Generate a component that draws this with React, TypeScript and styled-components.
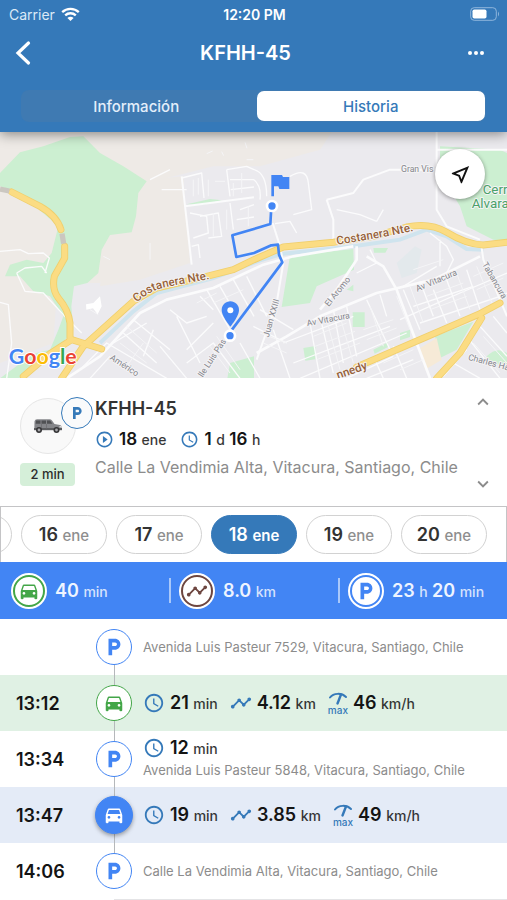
import React from "react";
import styled, { createGlobalStyle } from "styled-components";
import {
  MdAccessTime,
  MdDirectionsCar,
  MdExpandLess,
  MdExpandMore,
  MdLocalParking,
  MdOutlineNearMe,
  MdPlayCircleOutline,
  MdTimeline,
} from "react-icons/md";

const color = {
  header: "#3579b9",
  primary: "#3579b9",
  accent: "#4285f4",
  green: "#43a648",
  brown: "#6d4640",
  ink: "#141414",
  muted: "#8c8c8c",
  line: "#c4c4c6",
};

const GlobalStyle = createGlobalStyle`
  * { box-sizing: border-box; }
  body {
    margin: 0;
    background: #fff;
    color: ${color.ink};
    font-family: Inter, "Liberation Sans", sans-serif;
  }
  button { font: inherit; color: inherit; border: 0; background: none; padding: 0; cursor: pointer; }
  svg { display: block; flex: none; }
  h1, h2, p, ol { margin: 0; padding: 0; }
`;

/* ---------- Header ---------- */

const Header = styled.header`
  position: relative;
  z-index: 1;
  padding-bottom: 10px;
  background: ${color.header};
  color: #fff;
  box-shadow: 0 2px 12px rgba(0, 0, 0, 0.45);
`;

const StatusBar = styled.div`
  display: grid;
  grid-template-columns: 1fr auto 1fr;
  align-items: center;
  height: 28px;
  padding: 0 7px 0 9px;
  font-size: 14px;
`;

const Carrier = styled.span`
  display: flex;
  align-items: center;
  gap: 6px;
  color: #dbe9f7;
`;

const Clock = styled.span`
  font-weight: 600;
`;

const BatterySlot = styled.span`
  justify-self: end;
`;

const NavBar = styled.div`
  display: grid;
  grid-template-columns: 48px 1fr 56px;
  align-items: center;
  height: 50px;
  padding: 0 22px 0 14px;
`;

const NavButton = styled.button<{ $end?: boolean }>`
  display: flex;
  justify-content: ${(p) => (p.$end ? "flex-end" : "flex-start")};
  align-items: center;
  height: 40px;
`;

const Title = styled.h1`
  text-align: center;
  font-size: 20px;
  line-height: 28px;
  font-weight: 600;
`;

const Segmented = styled.div`
  display: grid;
  grid-template-columns: 1fr 1fr;
  gap: 4px;
  margin: 12px 21px 0;
  border-radius: 8px;
  background: #3f7ab2;
`;

const Segment = styled.button<{ $active?: boolean }>`
  height: 32px;
  border: 1px solid transparent;
  border-radius: 8px;
  background-clip: padding-box;
  font-size: 15px;
  font-weight: 500;
  ${(p) =>
    p.$active
      ? `background-color: #fff; color: ${color.primary};`
      : `color: #e3eefa;`}
`;

/* ---------- Map ---------- */

const MapFrame = styled.section`
  position: relative;
  height: 246px;
  overflow: hidden;
`;

const MapArt = styled.svg`
  width: 100%;
  height: 100%;
`;

const LocateButton = styled.button`
  position: absolute;
  top: 17px;
  right: 22px;
  display: grid;
  place-items: center;
  width: 50px;
  height: 50px;
  border-radius: 50%;
  background: #fff;
  color: #111;
  box-shadow: 0 1px 4px rgba(0, 0, 0, 0.4);
`;

/* ---------- Vehicle card ---------- */

const VehicleCard = styled.section`
  display: grid;
  grid-template-columns: 75px 1fr 24px;
  height: 128px;
  padding: 18px 11px 0 20px;
`;

const AvatarColumn = styled.div`
  display: flex;
  flex-direction: column;
  gap: 9px;
`;

const Avatar = styled.div`
  position: relative;
  display: grid;
  place-items: center;
  width: 56px;
  height: 56px;
  margin-top: 2px;
  border: 1px solid #e6e6e6;
  border-radius: 50%;
  background: #f9f9f9;
`;

const ParkedBadge = styled.span`
  position: absolute;
  top: -2px;
  left: 40px;
  display: grid;
  place-items: center;
  width: 32px;
  height: 32px;
  border: 1px solid ${color.primary};
  border-radius: 50%;
  background: #f9fafb;
  color: ${color.primary};
`;

const AgeTag = styled.span`
  width: 55px;
  border-radius: 4px;
  background: #d5efd9;
  color: #2c2c2c;
  text-align: center;
  font-size: 13px;
  line-height: 23px;
  font-weight: 500;
`;

const Plate = styled.h2`
  font-size: 18px;
  line-height: 26px;
  font-weight: 600;
  color: #333;
`;

const VehicleFacts = styled.div`
  display: flex;
  align-items: center;
  gap: 14px;
  height: 34px;
`;

const VehicleAddress = styled.p`
  font-size: 16px;
  line-height: 22px;
  color: ${color.muted};
  white-space: nowrap;
`;

const Steppers = styled.div`
  display: flex;
  flex-direction: column;
  justify-content: space-between;
  height: 104px;
  margin-top: -5px;
  color: ${color.muted};
`;

/* ---------- Quantities ---------- */

const Fact = styled.span`
  display: inline-flex;
  align-items: center;
  gap: 5px;
  white-space: nowrap;
`;

const FactIcon = styled.span`
  display: inline-flex;
  color: ${color.primary};
`;

const Value = styled.span<{ $small?: boolean }>`
  font-size: ${(p) => (p.$small ? 17 : 18)}px;
  line-height: 22px;
  font-weight: 600;
`;

const Unit = styled.span`
  font-size: 14px;
  font-weight: 500;
  opacity: 0.85;
`;

/* ---------- Day picker ---------- */

const DayStrip = styled.nav`
  display: flex;
  justify-content: flex-end;
  gap: 9px;
  padding: 8px 19px 8px 0;
  overflow: hidden;
  border: 1px solid ${color.line};
  border-bottom: 0;
`;

const DayPill = styled.button<{ $active?: boolean }>`
  flex: none;
  width: 86px;
  height: 39px;
  border: 1px solid ${(p) => (p.$active ? color.primary : "#d2d2d2")};
  border-radius: 20px;
  background: ${(p) => (p.$active ? color.primary : "#fff")};
  color: ${(p) => (p.$active ? "#fff" : "#333")};
  font-size: 18px;
  font-weight: 600;
`;

const Month = styled.span<{ $active?: boolean }>`
  color: ${(p) => (p.$active ? "#fff" : "#8e8e8e")};
  font-size: 15px;
  font-weight: ${(p) => (p.$active ? 600 : 500)};
`;

/* ---------- Summary ---------- */

const Summary = styled.section`
  display: grid;
  grid-template-columns: repeat(3, 1fr);
  align-items: center;
  height: 57px;
  background: ${color.accent};
  color: #eef4ff;
`;

const Total = styled.div<{ $divided?: boolean }>`
  display: flex;
  align-items: center;
  gap: 8px;
  padding-left: ${(p) => (p.$divided ? 0 : 11)}px;
  white-space: nowrap;
`;

const Divider = styled.span`
  width: 2px;
  height: 25px;
  background: #a9c8fa;
`;

const TotalBadge = styled.span<{ $color: string }>`
  display: grid;
  place-items: center;
  flex: none;
  width: 36px;
  height: 36px;
  border: 2px solid #fff;
  border-radius: 50%;
  background: #fff;
  color: ${(p) => p.$color};
`;

const BadgeRing = styled.span`
  display: grid;
  place-items: center;
  width: 32px;
  height: 32px;
  border: 2px solid currentColor;
  border-radius: 50%;
`;

/* ---------- Timeline ---------- */

const Timeline = styled.ol`
  list-style: none;
`;

const tint = { none: "#fff", green: "#e0f1e4", blue: "#e4ebf7" };
type Tint = keyof typeof tint;

const Entry = styled.li<{ $tint: Tint }>`
  display: grid;
  grid-template-columns: 79px 70px 1fr;
  align-items: center;
  height: 56px;
  background: ${(p) => tint[p.$tint]};
`;

const Time = styled.time`
  padding-left: 16px;
  font-size: 18px;
  font-weight: 600;
`;

type Segment = "start" | "middle" | "end";

const Track = styled.div<{ $segment: Segment }>`
  display: grid;
  place-items: center;
  height: 100%;
  background: linear-gradient(#b5b8bb, #b5b8bb) no-repeat;
  background-size: 1px ${(p) => (p.$segment === "middle" ? "100%" : "50%")};
  background-position: center ${(p) => (p.$segment === "start" ? "bottom" : "top")};
`;

const Stop = styled.span<{ $kind: "parked" | "trip" | "current" }>`
  display: grid;
  place-items: center;
  width: ${(p) => (p.$kind === "current" ? 38 : 36)}px;
  height: ${(p) => (p.$kind === "current" ? 38 : 36)}px;
  border: 1px solid ${(p) => (p.$kind === "trip" ? color.green : color.accent)};
  border-radius: 50%;
  background: ${(p) => (p.$kind === "current" ? color.accent : "#fff")};
  color: ${(p) =>
    p.$kind === "current" ? "#fff" : p.$kind === "trip" ? color.green : color.accent};
  box-shadow: ${(p) => (p.$kind === "current" ? "0 2px 4px rgba(0,0,0,.35)" : "none")};
`;

const Details = styled.div`
  display: flex;
  flex-direction: column;
  margin-left: -6px;
`;

const Facts = styled.div`
  display: flex;
  align-items: center;
  gap: 12px;
`;

const Place = styled.p`
  font-size: 13px;
  line-height: 22px;
  color: ${color.muted};
  white-space: nowrap;
`;

const EndRule = styled.div`
  height: 1px;
  margin-left: 114px;
  background: #e4e4e6;
`;

const MaxIcon = styled.span`
  display: flex;
  flex-direction: column;
  align-items: center;
  color: ${color.primary};
  font-size: 10px;
  line-height: 8px;
  font-weight: 500;
`;

/* ---------- Drawings ---------- */

const WifiGlyph = () => (
  <svg width="19" height="15" viewBox="0 0 19 15" fill="none" stroke="#fff" aria-hidden="true">
    <path d="M1.2 5.2C5.8.8 13.2.8 17.8 5.2" strokeWidth="2.3" />
    <path d="M4.2 8.4c3-2.9 7.6-2.9 10.6 0" strokeWidth="2.3" />
    <path d="M9.5 14L6.4 10.9c1.7-1.6 4.5-1.6 6.2 0z" fill="#fff" stroke="none" />
  </svg>
);

const BatteryGlyph = () => (
  <svg width="30" height="14" viewBox="0 0 30 14" aria-label="Batería">
    <rect x=".7" y=".7" width="25.6" height="12.6" rx="3.5" fill="none" stroke="#8fb6dc" />
    <rect x="2.5" y="2.5" width="14" height="9" rx="1.8" fill="#fff" />
    <path d="M28 4.5q2 2.5 0 5z" fill="#8fb6dc" />
  </svg>
);

const BackGlyph = () => (
  <svg width="18" height="26" viewBox="0 0 18 26" fill="none" aria-hidden="true">
    <path d="M14.500 3L4 13l10.500 10" stroke="#fff" strokeWidth="3.200" strokeLinecap="round" />
  </svg>
);

const DotsGlyph = () => (
  <svg width="18" height="6" viewBox="0 0 18 6" fill="#fff" aria-hidden="true">
    <circle cx="3" cy="3" r="2" />
    <circle cx="9" cy="3" r="2" />
    <circle cx="15" cy="3" r="2" />
  </svg>
);

const SuvDrawing = () => (
  <svg width="30" height="16" viewBox="0 0 30 16" aria-hidden="true">
    <path d="M1.5 3.2Q2 1.2 4 1.2h12.5q1.5 0 2.5 1.4L21.500 6l5.500 1q1.600.5 1.600 2v3H1.300z" fill="#85868a" />
    <path d="M3 2.500h4.500v3.300H2.700zM8.500 2.500h4.500v3.300H8.500zM14 2.500h3l2.500 3.300H14z" fill="#505154" />
    <path d="M1 10h28v2.200H1z" fill="#5c5d60" />
    <path d="M8.500 6v5M13.500 6v5" stroke="#66676a" strokeWidth=".6" />
    <path d="M26.500 8h2v1.500h-2z" fill="#ddd" />
    <circle cx="6" cy="12" r="3" fill="#353537" />
    <circle cx="6" cy="12" r="1.400" fill="#a7a7aa" />
    <circle cx="23.500" cy="12" r="3" fill="#353537" />
    <circle cx="23.500" cy="12" r="1.400" fill="#a7a7aa" />
  </svg>
);

const GaugeGlyph = () => (
  <svg width="20" height="14" viewBox="0 0 20 14" fill="none" stroke="currentColor" aria-hidden="true">
    <path d="M2 5.500C5.500 1 13.500.5 18 5" strokeWidth="2" strokeLinecap="round" />
    <path d="M13 2.500L9.500 11.500" strokeWidth="2.400" strokeLinecap="round" />
  </svg>
);

const CityMap = () => (
  <MapArt viewBox="0 6 1521 740" preserveAspectRatio="xMidYMid slice" role="img" aria-label="Mapa del recorrido">
    <rect width="1521" height="750" fill="#ebeaee" />
    {/* hills */}
    <g fill="#eeeae6">
      <path d="M0 0H1000L960 60 780 110 640 110 560 130 440 160 400 320 330 400 300 460H0z" />
      <path d="M0 330L180 350 160 640 0 700z" />
      <path d="M440 150L550 140 570 400 420 450 300 470 320 320z" />
    </g>
    {/* parks */}
    <g fill="#ccefd1">
      <path d="M0 130L60 68 130 50 210 22 250 20 300 70 370 110 440 155 415 190 408 260 395 308 330 316 305 360 295 430 262 460 222 470 214 530 220 600 170 660 60 746 0 746 100 672 150 660 175 600 190 560 150 500 100 485 60 440 15 440 30 405 80 390 130 400 155 370 175 290 60 190 0 170z" />
      <path d="M870 378L1060 358 1062 420 950 470 930 520 845 532z" />
      <path d="M1320 50L1500 60 1521 70V335L1480 330 1400 290 1380 230 1320 130z" />
      <path d="M1058 548h36v44h-36zM910 655l36-6v40l-30 4zM1120 355h44l-8 14h-34zM1305 620L1420 576 1370 660 1320 685zM1460 680q30-30 61-10v34h-61zM1200 610l30-10v22l-30 10zM1120 660l44-22v14l-40 20zM690 700l72-20v66h-80zM1040 480l20-15v20zM560 224l70-16 36 4-60 14z" />
    </g>
    <path d="M1190 400l55-50 20 10-15 70-45 15z" fill="#e3e9ec" />
    <path d="M1260 655l50-30 15 65-50 30z" fill="#f6ead7" />
    {/* river */}
    <path d="M300 640L400 545 470 490 640 445 780 392 850 372 1060 350 1200 330 1280 300 1340 320 1400 358 1450 360" fill="none" stroke="#cfe4ee" strokeWidth="12" />
    {/* streets */}
    <g fill="none" stroke="#fbfbfc" strokeWidth="4" strokeLinejoin="round">
      <path strokeWidth="8" d="M200 746L300 680 420 550 500 510 640 475 790 405 880 380 1060 350M770 670L860 620 960 560 1130 490 1300 450 1440 380" />
      <path strokeWidth="8" d="M1100 380L1150 410 1190 480 1235 600 1290 746M1070 350V390L1010 480 960 540" />
      <path strokeWidth="6" d="M818 280L840 350 850 400 830 520 770 690" />
      <path d="M0 365L60 360 85 372 130 370 148 385 135 430M50 430L75 415 125 410 140 430M50 430L75 485 130 490 190 555 245 610M0 518L25 525 35 640 20 746" />
      <path strokeWidth="6" d="M545 140L575 405M555 230L762 203" />
      <path d="M545 145L605 130 612 205M570 250L620 260 625 310 580 325M600 260L655 250 665 320 625 325M560 180H485M450 150L510 120M680 120L740 110 762 120M680 120L690 200M690 150H762M692 180L762 172M690 220L700 300M720 240L762 225M710 270L762 262M575 350L595 345 600 385" />
      <path d="M870 140Q920 110 925 160L935 240 880 255M762 120Q800 130 800 200M762 150Q785 170 780 210M825 282L870 275 890 310" />
      <path strokeWidth="6" d="M980 210L1000 270 1000 330M980 210L1060 190 1090 150 1170 120 1300 120M1310 0V240L1340 290 1440 330M1310 60H1521" />
      <path d="M1010 240L1080 255 1130 275M1130 275L1150 240" />
      <path strokeWidth="6" d="M1445 355L1450 390 1521 560" />
      <path d="M1290 310L1340 350 1360 390 1340 430M1320 330V410M1110 360L1130 400 1070 430M1310 410L1210 470M1521 430L1380 490 1200 570M1521 490L1500 500" />
      <path d="M400 570L510 660M370 610L470 700M510 540L560 580 620 560M530 560L600 700M560 660L640 580M600 500L640 540M620 480L690 600M660 470L700 540M700 450L762 560M740 440L800 560M760 590L860 640M720 640L780 746M820 600L870 746M780 540L880 600" />
      <path d="M930 580L960 746M960 560L1000 730M1000 540L1030 700M1040 530L1070 680M850 640L1060 560M880 700L1170 590M900 746L1220 610M1100 510L1170 660M1140 495L1160 560M1210 480L1260 600M1260 455L1300 560M1300 480L1340 580M1340 450L1380 560M1400 420L1440 540M1240 530L1420 470M1260 580L1500 500" />
      <path d="M1440 590L1521 680M1400 620L1500 746M1360 700L1440 746M1330 740L1400 660M1480 560L1521 610M1040 746L1180 680M1100 746L1240 690M1180 650L1220 746M1120 680L1150 746" />
      <path d="M240 720L320 640 500 746M270 746L330 680M340 640L440 580M460 600L430 680M480 650L560 746M560 700L640 640 720 746" />
    </g>
    {/* dense block grids */}
    <g fill="none" stroke="#f5f5f7" strokeWidth="3">
      <path d="M580 150v50M595 145v50M625 150v50M645 155h30M640 250v70M680 240v60M700 160v40M725 130v60M745 230v60" />
      <path d="M380 590l90 80M360 640l80 60M430 640l-50 70M590 520l60-30M640 520l90-40M650 620l70 100M630 650l60 80M780 610l80 30M790 640l70 30" />
      <path d="M940 620l100-40M945 650l120-45M950 690l130-50M1090 600l90-30M1100 630l90-35M1240 420l90-30M1280 500l110-40M1290 540l110-40M1420 440l90-40M1430 480l80-35M1150 700l90-40M1200 720l70-30" />
      <path d="M980 570l40 150M1020 560l40 140M1110 530l40 120M1190 500l40 100M1230 470l40 110M1370 430l40 110M1430 410l50 120M1420 640l80 90M1450 620l71 80" />
      <path d="M620 72l18-8M665 66l6 12M735 38l6 18M740 90h20M310 380l20 10M450 340v50M270 540l25 15" />
    </g>
    <path d="M258 524l22-4 20-20 5 30-12 24-14-18-20 4z" fill="#fff" />
    {/* highways */}
    <g fill="none" strokeLinejoin="round" strokeLinecap="round">
      <g stroke="#f0cf6d" strokeWidth="21">
        <path d="M35 187L120 230Q170 258 183 300M194 350V385L163 440Q155 480 175 505 205 540 210 580L210 630" />
        <path d="M185 746L250 650 400 515 470 475 620 440 700 420 762 390 850 352 1000 338 1120 320 1220 292Q1290 278 1340 308 1400 345 1450 346L1521 338" />
        <path d="M70 740L150 672 215 630 305 658M1070 712L1440 552 1500 520M1310 746L1380 670 1445 565" />
      </g>
      <g stroke="#fbdc83" strokeWidth="16">
        <path d="M35 187L120 230Q170 258 183 300M194 350V385L163 440Q155 480 175 505 205 540 210 580L210 630" />
        <path d="M185 746L250 650 400 515 470 475 620 440 700 420 762 390 850 352 1000 338 1120 320 1220 292Q1290 278 1340 308 1400 345 1450 346L1521 338" />
        <path d="M70 740L150 672 215 630 305 658M1070 712L1440 552 1500 520M1310 746L1380 670 1445 565" />
      </g>
      <path d="M0 178L28 184M186 312L191 342" stroke="#cbc7c0" strokeWidth="16" strokeLinecap="butt" />
    </g>
    {/* labels */}
    <g fontFamily="Roboto, sans-serif" stroke="#f4f3f5" strokeWidth="6" strokeLinejoin="round" paintOrder="stroke">
      <defs>
        <path id="road-west" d="M410 519Q450 482 500 472T650 444" />
        <path id="road-east" d="M1011 345L1130 326 1280 296" />
      </defs>
      <g fill="#97623a" fontSize="35" fontWeight="500">
        <text><textPath href="#road-west">Costanera Nte.</textPath></text>
        <text><textPath href="#road-east">Costanera Nte.</textPath></text>
        <text transform="translate(1014 748) rotate(-19)">nnedy</text>
      </g>
      <g fill="#85868c" fontSize="26">
        <text transform="translate(328 688) rotate(33)">Américo</text>
        <text transform="translate(608 744) rotate(-57)">lle Luis Pas</text>
        <text transform="translate(806 624) rotate(-74)">Juan XXIII</text>
        <text transform="translate(986 532) rotate(-51)">El Aromo</text>
        <text transform="translate(922 590) rotate(-11)">Av Vitacura</text>
        <text transform="translate(1252 486) rotate(-23)">Av Vitacura</text>
        <text transform="translate(1446 404) rotate(60)">Tabancura</text>
        <text transform="translate(1403 690) rotate(15)">Charles Ha</text>
        <text x="1203" y="126">Gran Vis</text>
      </g>
      <g fill="#4aa269" fontSize="40">
        <text x="1448" y="192">Cerro</text>
        <text x="1415" y="234">Alvarado</text>
      </g>
    </g>
    {/* route */}
    <path d="M814 232L811 283 697 317 709 382 762 370 814 347 834 345 837 375 847 398 762 512 696 600" fill="none" stroke="#4285f4" strokeWidth="8" strokeLinejoin="round" />
    <path d="M814 136h32l3 6h19v36h-30l-3-8h-13v30h-8z" fill="#4285f4" />
    <path d="M691 515c-14 0-26 11-26 26 0 19 26 50 26 50s26-31 26-50c0-15-12-26-26-26z" fill="#4285f4" />
    <circle cx="691" cy="542" r="9" fill="#fff" />
    <g fill="#4285f4" stroke="#fff" strokeWidth="8">
      <circle cx="816" cy="229" r="15" />
      <circle cx="690" cy="618" r="15" />
    </g>
    <text x="26" y="704" fontFamily="Lato, sans-serif" fontSize="64" fontWeight="700" stroke="#fff" strokeWidth="6" paintOrder="stroke">
      <tspan fill="#4285f4">G</tspan><tspan fill="#ea4335">o</tspan><tspan fill="#fbbc05">o</tspan><tspan fill="#4285f4">g</tspan><tspan fill="#34a853">l</tspan><tspan fill="#ea4335">e</tspan>
    </text>
  </MapArt>
);

/* ---------- Data ---------- */

const days = ["15", "16", "17", "18", "19", "20"];

interface TimelineEntry {
  time?: string;
  kind: "parked" | "trip" | "current";
  tint: Tint;
  segment: Segment;
  minutes?: string;
  km?: string;
  speed?: string;
  place?: string;
}

const entries: TimelineEntry[] = [
  { kind: "parked", tint: "none", segment: "start", place: "Avenida Luis Pasteur 7529, Vitacura, Santiago, Chile" },
  { time: "13:12", kind: "trip", tint: "green", segment: "middle", minutes: "21", km: "4.12", speed: "46" },
  { time: "13:34", kind: "parked", tint: "none", segment: "middle", minutes: "12", place: "Avenida Luis Pasteur 5848, Vitacura, Santiago, Chile" },
  { time: "13:47", kind: "current", tint: "blue", segment: "middle", minutes: "19", km: "3.85", speed: "49" },
  { time: "14:06", kind: "parked", tint: "none", segment: "end", place: "Calle La Vendimia Alta, Vitacura, Santiago, Chile" },
];

const Quantity = ({ value, unit, small }: { value: string; unit: string; small?: boolean }) => (
  <span>
    <Value $small={small}>{value}</Value> <Unit>{unit}</Unit>
  </span>
);

export default function App() {
  return (
    <>
      <GlobalStyle />
      <Header>
        <StatusBar>
          <Carrier>Carrier <WifiGlyph /></Carrier>
          <Clock>12:20 PM</Clock>
          <BatterySlot><BatteryGlyph /></BatterySlot>
        </StatusBar>
        <NavBar>
          <NavButton aria-label="Volver"><BackGlyph /></NavButton>
          <Title>KFHH-45</Title>
          <NavButton $end aria-label="Más opciones"><DotsGlyph /></NavButton>
        </NavBar>
        <Segmented>
          <Segment>Información</Segment>
          <Segment $active aria-pressed="true">Historia</Segment>
        </Segmented>
      </Header>

      <MapFrame>
        <CityMap />
        <LocateButton aria-label="Centrar mapa"><MdOutlineNearMe size={23} /></LocateButton>
      </MapFrame>

      <VehicleCard>
        <AvatarColumn>
          <Avatar>
            <SuvDrawing />
            <ParkedBadge><MdLocalParking size={16} /></ParkedBadge>
          </Avatar>
          <AgeTag>2 min</AgeTag>
        </AvatarColumn>
        <div>
          <Plate>KFHH-45</Plate>
          <VehicleFacts>
            <Fact>
              <FactIcon><MdPlayCircleOutline size={19} /></FactIcon>
              <Quantity small value="18" unit="ene" />
            </Fact>
            <Fact>
              <FactIcon><MdAccessTime size={19} /></FactIcon>
              <span>
                <Quantity small value="1" unit="d" /> <Quantity small value="16" unit="h" />
              </span>
            </Fact>
          </VehicleFacts>
          <VehicleAddress>Calle La Vendimia Alta, Vitacura, Santiago, Chile</VehicleAddress>
        </div>
        <Steppers>
          <button aria-label="Vehículo anterior"><MdExpandLess size={22} /></button>
          <button aria-label="Vehículo siguiente"><MdExpandMore size={22} /></button>
        </Steppers>
      </VehicleCard>

      <DayStrip aria-label="Día">
        {days.map((day) => (
          <DayPill key={day} $active={day === "18"}>
            {day} <Month $active={day === "18"}>ene</Month>
          </DayPill>
        ))}
      </DayStrip>

      <Summary>
        <Total>
          <TotalBadge $color={color.green}><BadgeRing><MdDirectionsCar size={22} /></BadgeRing></TotalBadge>
          <Quantity value="40" unit="min" />
        </Total>
        <Total $divided>
          <Divider />
          <TotalBadge $color={color.brown}><BadgeRing><MdTimeline size={22} /></BadgeRing></TotalBadge>
          <Quantity value="8.0" unit="km" />
        </Total>
        <Total $divided>
          <Divider />
          <TotalBadge $color={color.accent}><BadgeRing><MdLocalParking size={22} /></BadgeRing></TotalBadge>
          <span>
            <Quantity value="23" unit="h" /> <Quantity value="20" unit="min" />
          </span>
        </Total>
      </Summary>

      <Timeline>
        {entries.map((entry, index) => (
          <Entry key={index} $tint={entry.tint}>
            <Time>{entry.time}</Time>
            <Track $segment={entry.segment}>
              <Stop $kind={entry.kind}>
                {entry.kind === "parked" ? <MdLocalParking size={22} /> : <MdDirectionsCar size={22} />}
              </Stop>
            </Track>
            <Details>
              {entry.minutes && (
                <Facts>
                  <Fact>
                    <FactIcon><MdAccessTime size={22} /></FactIcon>
                    <Quantity value={entry.minutes} unit="min" />
                  </Fact>
                  {entry.km && (
                    <Fact>
                      <FactIcon><MdTimeline size={22} /></FactIcon>
                      <Quantity value={entry.km} unit="km" />
                    </Fact>
                  )}
                  {entry.speed && (
                    <Fact>
                      <MaxIcon><GaugeGlyph />max</MaxIcon>
                      <Quantity value={entry.speed} unit="km/h" />
                    </Fact>
                  )}
                </Facts>
              )}
              {entry.place && <Place>{entry.place}</Place>}
            </Details>
          </Entry>
        ))}
      </Timeline>
      <EndRule />
    </>
  );
}
